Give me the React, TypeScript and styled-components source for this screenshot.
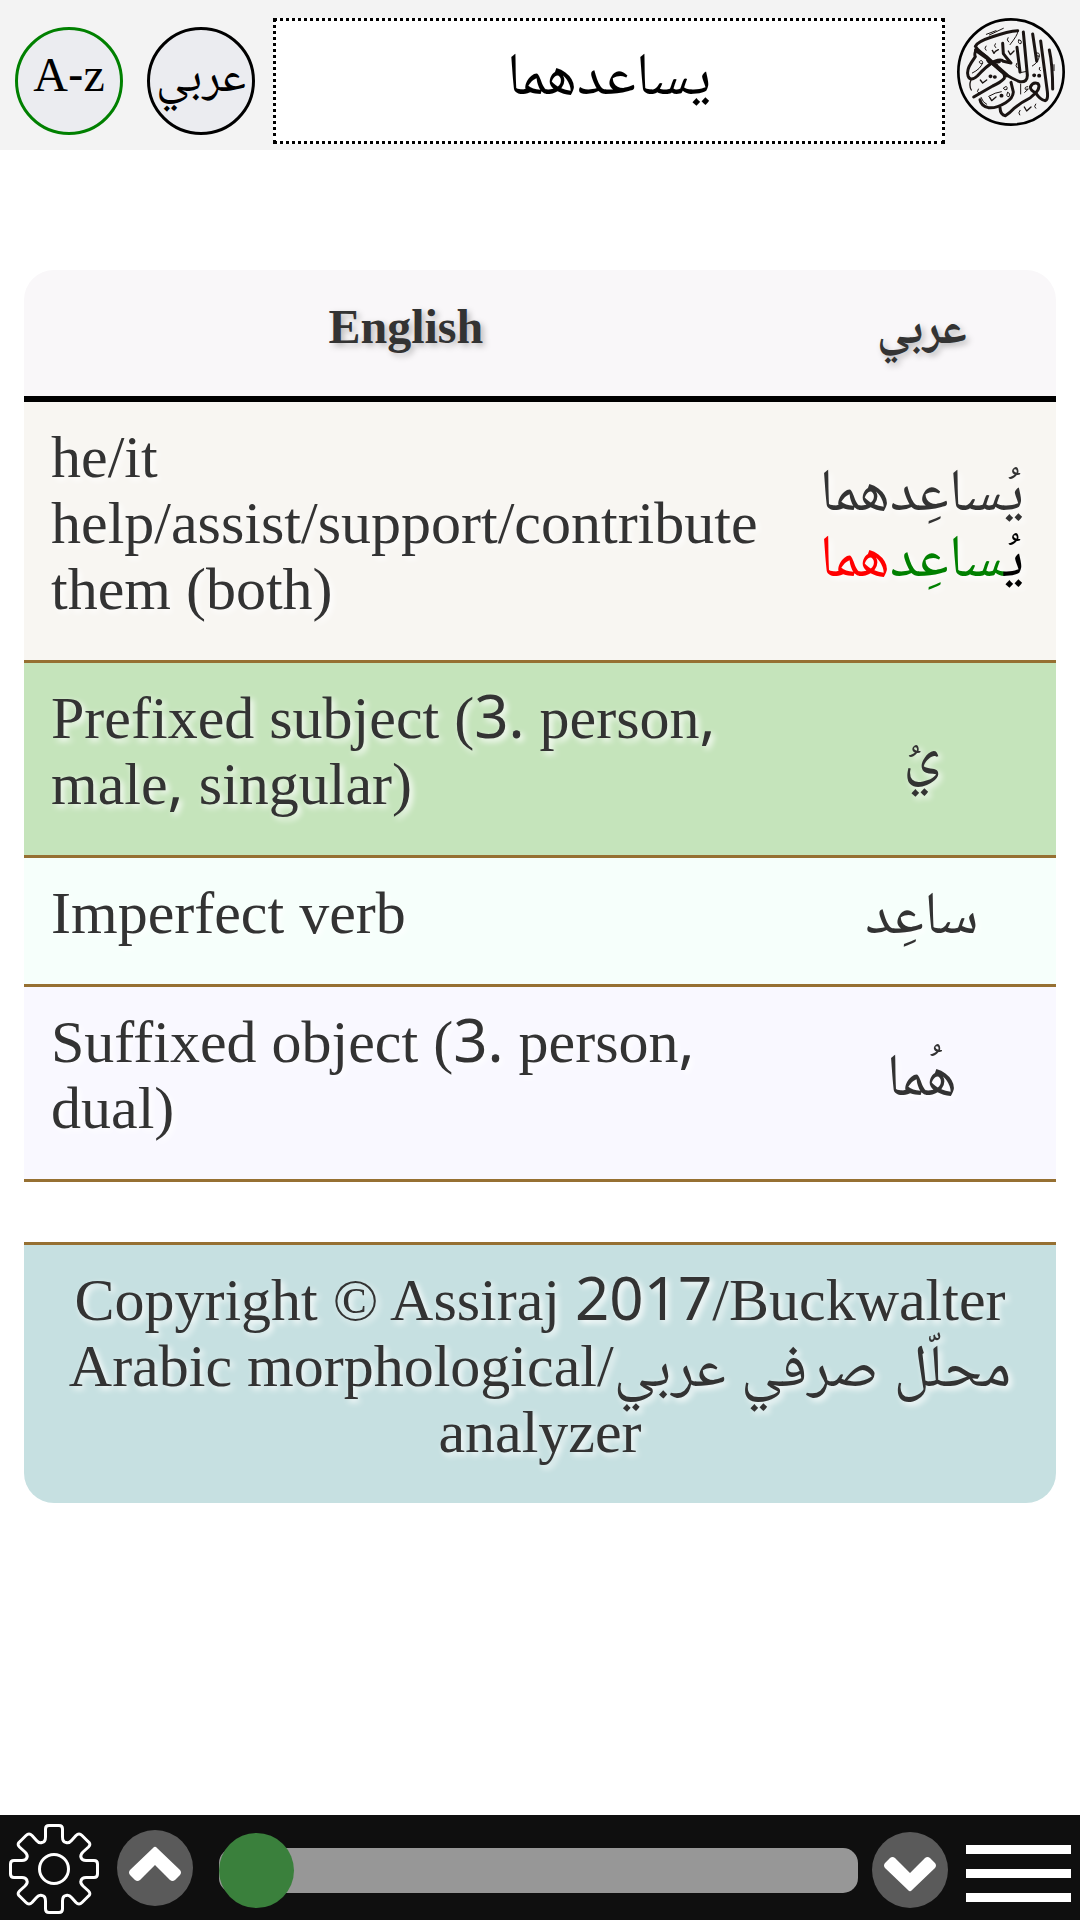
import React, { useState } from "react";
import styled, { createGlobalStyle } from "styled-components";

const serif = `"Liberation Serif", "Noto Naskh Arabic", "Noto Sans Arabic", serif`;
const sans = `"Noto Sans", "Open Sans", sans-serif`;

const GlobalStyle = createGlobalStyle`
  * { box-sizing: border-box; }
  body { margin: 0; background: #fff; font-family: ${serif}; color: #333; }
  button { padding: 0; border: 0; background: none; font: inherit; cursor: pointer; }
  svg { display: block; }
`;

const Page = styled.div`
  min-height: 100vh;
  display: flex;
  flex-direction: column;
`;

const TopBar = styled.header`
  display: flex;
  align-items: flex-start;
  gap: 12px;
  height: 150px;
  padding: 18px 15px 6px;
  background: #f3f3f3;
`;

const Languages = styled.div`
  display: flex;
  gap: 24px;
  padding: 9px 6px 0 0;
`;

const RoundButton = styled.button<{ $ring: string }>`
  && {
    width: 108px;
    height: 108px;
    flex: none;
    padding-bottom: 12px;
    border: 3px solid ${(p) => p.$ring};
    border-radius: 50%;
    background: #ebecf0;
    color: #000;
    font-size: 48px;
    line-height: 60px;
    white-space: nowrap;
  }
`;

const Sans = styled.span`
  font-family: ${sans};
  line-height: 1;
`;

const SearchBox = styled.input`
  flex: 1;
  min-width: 0;
  height: 126px;
  padding: 0 12px;
  border: 3px dotted #000;
  border-radius: 0;
  background: #fff;
  color: #000;
  font-family: ${serif};
  font-size: 60px;
  text-align: center;
  outline: none;
`;

const LogoLink = styled.a`
  flex: none;
  width: 108px;
  height: 108px;
  color: #1a1412;
`;

const Main = styled.main`
  flex: 1;
  padding: 120px 24px 0;
`;

const Analysis = styled.table`
  width: 100%;
  border-collapse: separate;
  border-spacing: 0;
  border-radius: 30px;
  overflow: hidden;
  font-size: 60px;
  line-height: 66px;
`;

const HeadCell = styled.th`
  padding: 24px 27px 36px;
  background: #f9f7f9;
  border-bottom: 6px solid #000;
  font-size: 48px;
  text-shadow: 3px 3px 6px rgba(0, 0, 0, 0.25);
`;

const Cell = styled.td<{ $bg: string; $center?: boolean; $last?: boolean }>`
  padding: 22px 27px 38px;
  background: ${(p) => p.$bg};
  border-bottom: ${(p) => (p.$last ? "0" : "3px solid #967032")};
  text-align: ${(p) => (p.$center ? "center" : "left")};
  text-shadow: 3px 3px 6px #fff;
`;

const Part = styled.span<{ $color: string }>`
  color: ${(p) => p.$color};
`;

const BottomBar = styled.footer`
  display: flex;
  align-items: flex-start;
  height: 105px;
  padding: 9px;
  background: #0f0f0f;
`;

const IconButton = styled.button<{ $gap: number; $drop: number }>`
  && {
    flex: none;
    margin: ${(p) => p.$drop}px ${(p) => p.$gap}px 0 0;
  }
`;

const Range = styled.input`
  flex: 1;
  min-width: 0;
  height: 45px;
  margin: 24px 14px 0 0;
  appearance: none;
  border-radius: 15px;
  background: #979797;
  outline: none;

  &::-webkit-slider-thumb {
    appearance: none;
    width: 75px;
    height: 75px;
    border-radius: 50%;
    background: #3a803c;
  }
`;

const Menu = styled.button`
  && {
    flex: none;
    width: 105px;
    margin-top: 21px;
    display: flex;
    flex-direction: column;
    gap: 15px;
  }
`;

const MenuLine = styled.span`
  height: 9px;
  width: 100%;
  background: #fff;
`;

function Logo() {
  return (
    <svg width="108" height="108" viewBox="51 54 324 324" fill="none" stroke="currentColor" strokeLinecap="round" strokeLinejoin="round">
      <circle cx="213" cy="216" r="158" stroke="#000" strokeWidth="8" />
      <g strokeWidth="3">
        <path d="M139 103L168 92M148 105L190 85" />
        <path d="M234 94Q234 104 210 134" />
        <path d="M97 219Q122 207 128 188Q126 177 118 185Q117 192 128 190" />
        <path d="M277 198Q298 186 298 164Q294 153 289 163Q289 170 298 169" />
        <path d="M240 218L261 214M242 252V282" />
        <path d="M146 289Q166 277 184 275M123 292Q129 309 140 313" />
        <path d="M138 138Q131 145 138 151M166 131Q160 138 167 143M204 113Q198 120 206 126M230 190Q224 198 232 204M299 202Q294 208 301 212M342 194V212M115 267Q108 276 117 280M240 331Q233 339 239 345M287 312Q280 320 287 325" />
        <path d="M236 120Q247 119 243 131Q232 132 236 120M203 277Q213 280 207 290Q196 291 203 277M190 265Q203 252 201 268Q195 273 190 265M263 260Q253 260 256 268L265 267L254 277" />
      </g>
      <g strokeWidth="4">
        <path d="M157 151L162 160L166 154L175 149M205 153L211 164L222 153M121 240L128 249L140 240M149 292L155 302L168 291M253 321L260 333L273 321" />
      </g>
      <g strokeWidth="9">
        <path d="M233 92Q205 93 155 111Q112 125 106 139Q113 151 139 170Q165 202 196 223Q218 237 239 245Q263 248 262 225L250 96" />
        <path d="M108 150L139 172L200 226" strokeWidth="12" />
        <path d="M108 150Q102 164 106 170L94 188Q79 211 84 227Q91 247 112 228Q139 198 163 184Q185 176 190 184L213 189Q197 171 190 161L188 130" />
        <path d="M143 181Q161 193 180 208Q197 222 193 235Q182 248 158 258L101 291" />
        <path d="M93 239Q86 257 94 270" strokeWidth="4" />
        <path d="M213 247L220 276Q219 295 197 308Q167 326 145 323Q123 317 120 299" />
        <path d="M180 323Q181 345 196 347Q210 338 221 326Q244 307 270 294L288 278Q302 262 294 251Q279 244 271 261Q272 273 287 278Q299 298 315 302Q325 301 322 274L302 123" />
        <path d="M231 142L240 216M278 102L290 183M328 150Q338 195 338 267" />
        <path d="M146 185L170 196M152 189L178 185" />
      </g>
      <path strokeWidth="11" d="M151 229h1M164 231h1M282 226h1M297 227h1M184 287h1" />
    </svg>
  );
}

function Gear() {
  return (
    <svg width="90" height="90" viewBox="-45 -45 90 90" fill="none" stroke="#fff" strokeWidth="3" strokeLinejoin="round">
      <title>Settings</title>
      <circle r="14.500" />
      <path
        d="M-5 -43.500H5Q8.500 -43.500 8.500 -40V-32Q8.500 -27 12 -26.500Q15 -25.500 17.500 -28.500L22 -33.500Q25 -36.500 28 -33.500L34 -27.500Q37.500 -25 34.500 -22L29 -17Q26 -14 27 -11.500Q28 -8.500 32 -8.500H40Q43.500 -8.500 43.500 -5V5Q43.500 8.500 40 8.500H32Q28 8.500 27 11.500Q26 14 29 17L34.500 22Q37.500 25 34 27.500L28 33.500Q25 36.500 22 33.500L17.500 28.500Q15 25.500 12 26.500Q8.500 27 8.500 32V40Q8.500 43.500 5 43.500H-5Q-8.500 43.500 -8.500 40V32Q-8.500 27 -12 26.500Q-15 25.500 -17.500 28.500L-22 33.500Q-25 36.500 -28 33.500L-34 27.500Q-37.500 25 -34.500 22L-29 17Q-26 14 -27 11.500Q-28 8.500 -32 8.500H-40Q-43.500 8.500 -43.500 5V-5Q-43.500 -8.500 -40 -8.500H-32Q-28 -8.500 -27 -11.500Q-26 -14 -29 -17L-34.500 -22Q-37.500 -25 -34 -27.500L-28 -33.500Q-25 -36.500 -22 -33.500L-17.500 -28.500Q-15 -25.500 -12 -26.500Q-8.500 -27 -8.500 -32V-40Q-8.500 -43.500 -5 -43.500Z"
      />
    </svg>
  );
}

function Chevron({ down }: { down?: boolean }) {
  return (
    <svg width="76" height="76" viewBox="0 0 76 76">
      <circle cx="38" cy="38" r="38" fill="#5a5a5a" />
      <path
        d="M36 18Q38 15.500 40 18L63 40Q65 42.500 63 45L58 50Q55.500 52 53 50L38 35L23 50Q20.500 52 18 50L13 45Q11 42.500 13 40Z"
        fill="#fff"
        transform={down ? "rotate(180 38 38)" : undefined}
      />
    </svg>
  );
}

export default function App() {
  const [word, setWord] = useState("يساعدهما");
  const [position, setPosition] = useState(0);
  return (
    <Page>
      <GlobalStyle />
      <TopBar>
        <Languages>
          <RoundButton $ring="green">A<Sans>-</Sans>z</RoundButton>
          <RoundButton $ring="#000" lang="ar">عربي</RoundButton>
        </Languages>
        <SearchBox aria-label="Word" dir="rtl" lang="ar" value={word} onChange={(e) => setWord(e.target.value)} />
        <LogoLink href="#quran" aria-label="Quran">
          <Logo />
        </LogoLink>
      </TopBar>
      <Main>
        <Analysis>
          <colgroup>
            <col />
            <col style={{ width: "26%" }} />
          </colgroup>
          <thead>
            <tr>
              <HeadCell scope="col">English</HeadCell>
              <HeadCell scope="col" lang="ar">عربي</HeadCell>
            </tr>
          </thead>
          <tbody>
            <tr>
              <Cell $bg="#f8f6f2">he/it help/assist/support/contribute them (both)</Cell>
              <Cell $bg="#f8f6f2" $center lang="ar" dir="rtl">
                يُساعِدهما
                <br />
                <Part $color="#000">يُ</Part>
                <Part $color="green">ساعِد</Part>
                <Part $color="red">هما</Part>
              </Cell>
            </tr>
            <tr>
              <Cell $bg="#c5e4bb">
                Prefixed subject (<Sans>3.</Sans> person<Sans>,</Sans> male<Sans>,</Sans> singular)
              </Cell>
              <Cell $bg="#c5e4bb" $center lang="ar" dir="rtl">يُ</Cell>
            </tr>
            <tr>
              <Cell $bg="#f6fffb">Imperfect verb</Cell>
              <Cell $bg="#f6fffb" $center lang="ar" dir="rtl">ساعِد</Cell>
            </tr>
            <tr>
              <Cell $bg="#f9f8ff">
                Suffixed object (<Sans>3.</Sans> person<Sans>,</Sans> dual)
              </Cell>
              <Cell $bg="#f9f8ff" $center lang="ar" dir="rtl">هُما</Cell>
            </tr>
            <tr>
              <Cell $bg="#fff" colSpan={2} />
            </tr>
          </tbody>
          <tfoot>
            <tr>
              <Cell $bg="#c6e0e1" $center $last colSpan={2}>
                Copyright © Assiraj <Sans>2017</Sans>/Buckwalter Arabic morphological/محلّل صرفي عربي analyzer
              </Cell>
            </tr>
          </tfoot>
        </Analysis>
      </Main>
      <BottomBar>
        <IconButton $gap={18} $drop={0} aria-label="Settings">
          <Gear />
        </IconButton>
        <IconButton $gap={26} $drop={6} aria-label="Previous">
          <Chevron />
        </IconButton>
        <Range type="range" aria-label="Position" min={0} max={100} value={position} onChange={(e) => setPosition(Number(e.target.value))} />
        <IconButton $gap={18} $drop={8} aria-label="Next">
          <Chevron down />
        </IconButton>
        <Menu aria-label="Menu">
          <MenuLine />
          <MenuLine />
          <MenuLine />
        </Menu>
      </BottomBar>
    </Page>
  );
}
